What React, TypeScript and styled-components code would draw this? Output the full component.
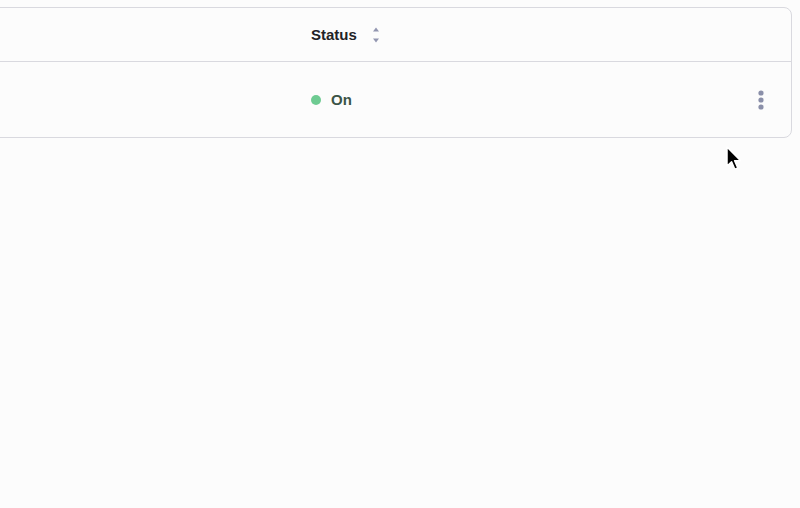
import React, { FC } from 'react';
import styled, { createGlobalStyle } from 'styled-components';

const GlobalStyle = createGlobalStyle`
  html, body {
    margin: 0;
    padding: 0;
    background: #fcfcfc;
    font-family: 'Liberation Sans', Arial, sans-serif;
  }
`;

const Page = styled.div`
  position: relative;
  width: 800px;
  height: 508px;
  overflow: hidden;
  box-sizing: border-box;
  padding: 7px 8px 0 0;
`;

const Card = styled.div`
  margin-left: -300px;
  border: 1px solid #d9d9df;
  border-radius: 8px;
  background: #fcfcfc;
  box-sizing: border-box;
`;

const Row = styled.div<{ height: number; last?: boolean }>`
  display: grid;
  grid-template-columns: 1fr 432px 48px;
  align-items: center;
  height: ${(p) => p.height}px;
  border-bottom: ${(p) => (p.last ? 'none' : '1px solid #d9d9df')};
`;

const Cell = styled.div`
  display: flex;
  align-items: center;
`;

const HeaderLabel = styled.span`
  font-size: 15px;
  font-weight: 700;
  color: #222226;
`;

const SortIcon = styled.svg`
  margin-left: 15px;
  width: 8px;
  height: 18px;
`;

const Dot = styled.span`
  width: 10px;
  height: 10px;
  border-radius: 50%;
  background: #6ecb92;
`;

const StatusText = styled.span`
  margin-left: 10px;
  font-size: 15px;
  font-weight: 700;
  color: #3b5447;
`;

const MenuButton = styled.button`
  border: none;
  background: transparent;
  padding: 0;
  margin-left: 15px;
  width: 6px;
  height: 22px;
  cursor: pointer;
  display: flex;
`;

const Cursor = styled.svg`
  position: absolute;
  left: 723px;
  top: 144px;
  width: 20px;
  height: 30px;
`;

const KebabIcon: FC = () => (
  <MenuButton aria-label='More'>
    <svg width='6' height='22' viewBox='0 0 6 22'>
      <circle cx='3' cy='4' r='2.6' fill='#8a8fa9' />
      <circle cx='3' cy='11' r='2.6' fill='#8a8fa9' />
      <circle cx='3' cy='18' r='2.6' fill='#8a8fa9' />
    </svg>
  </MenuButton>
);

export default function App() {
  return (
    <>
      <GlobalStyle />
      <Page>
        <Card>
          <Row height={53}>
            <Cell />
            <Cell>
              <HeaderLabel>Status</HeaderLabel>
              <SortIcon viewBox='0 0 8 18'>
                <path d='M4 1.5 L7 5.5 L1 5.5 Z' fill='#9296b0' />
                <path d='M4 16.5 L7 12.5 L1 12.5 Z' fill='#9296b0' />
              </SortIcon>
            </Cell>
            <Cell />
          </Row>
          <Row height={75} last>
            <Cell />
            <Cell>
              <Dot />
              <StatusText>On</StatusText>
            </Cell>
            <Cell>
              <KebabIcon />
            </Cell>
          </Row>
        </Card>
        <Cursor viewBox='0 0 20 30'>
          <path
            d='M4 3 L4 22 L8.6 17.8 L11.8 25.2 L14.8 24 L11.6 16.8 L17.6 16.8 Z'
            fill='#000'
            stroke='#fff'
            strokeWidth='1.5'
            strokeLinejoin='round'
          />
        </Cursor>
      </Page>
    </>
  );
}
